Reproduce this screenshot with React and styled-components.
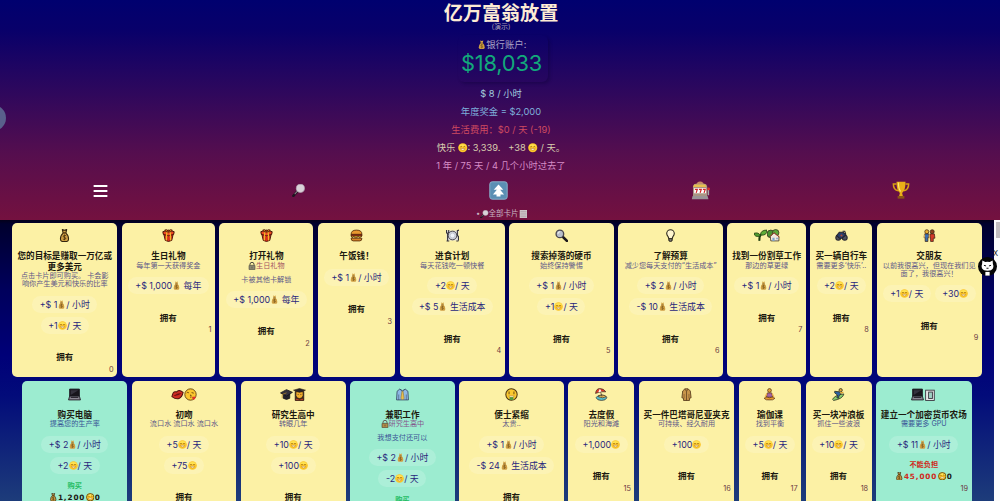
import React from "react";
import styled, { createGlobalStyle } from "styled-components";

const Global = createGlobalStyle`
  * { box-sizing: border-box; }
  html, body { margin: 0; height: 100%; overflow: hidden; }
  body { font-family: Inter, "Noto Sans CJK SC", sans-serif; background: #000070; }
`;

const face = (
  <g>
    <circle cx="12" cy="12" r="11.500" fill="#fcc62a" />
    <path d="M2 8.500a10.500 8 0 0 1 20 0z" fill="#ffe251" />
    <path d="M6 10q2-3 4 0M14 10q2-3 4 0" stroke="#7a4a0c" strokeWidth="1.800" fill="none" />
    <path d="M6.500 14h11q-1 4.500-5.500 4.500T6.500 14z" fill="#fff6dc" stroke="#b27a22" strokeWidth="1.300" />
  </g>
);
const bag = (ink) => (
  <g stroke={ink || "none"} strokeWidth={ink ? 2 : 0} strokeLinejoin="round">
    <path d="M8 1l4 1.500L16 1l-1.500 6.500h-5z" fill="#d3a648" />
    <path d="M9.500 7.500h5q5 4 5 11 0 4-3 4.500h-9q-3-.5-3-4.500 0-7 5-11z" fill="#cf9f43" />
    <path d="M8.500 7.500h7" stroke="#805a1c" strokeWidth="1.800" />
    <path d="M15 12.500q-3-2-5 0t2 3 2 3-5 0M12 10.500v10" fill="none" stroke={ink ? "#46300c" : "#71501a"} strokeWidth="1.400" />
  </g>
);
const laptop = (
  <g stroke="#1b1620" strokeWidth="1.600">
    <path d="M3 2h18v13H3z" fill="#17151c" />
    <path d="M5 4h14L5 13z" fill="#34323e" stroke="none" />
    <path d="M3 15h18l2 7H1z" fill="#8b8894" />
    <path d="M5 17.500h14" />
  </g>
);

const art = {
  face,
  faceInk: (
    <g>
      {face}
      <circle cx="12" cy="12" r="10.500" fill="none" stroke="#3a2a10" strokeWidth="2" />
    </g>
  ),
  bag: bag(null),
  bagInk: bag("#33250f"),
  gift: (
    <g stroke="#4a1509" strokeWidth="1.800" strokeLinejoin="round">
      <path d="M3 8l3 13 6 2 6-2 3-13z" fill="#d8311c" />
      <path d="M1.500 5l10.500-3 10.500 3-1 5-9.500 2.500L2.500 10z" fill="#ec4a22" />
      <path d="M9 3l-1 18M15 3l1 18" stroke="#f4b52a" strokeWidth="2.400" />
      <path d="M5 2q4-2 7 2 3-4 7-2-2 4-7 3.500Q7 6 5 2z" fill="#f6a623" />
    </g>
  ),
  burger: (
    <g stroke="#4d2608" strokeWidth="1.500">
      <path d="M2 10q0-8 10-8t10 8z" fill="#e9972f" />
      <path d="M2 10h20v3H2z" fill="#d9362a" />
      <path d="M2 13h20l-4 3-3-2-4 3-4-3-3 2z" fill="#f7d23b" />
      <path d="M2 17h20q0 5-4 5H6q-4 0-4-5z" fill="#d98428" />
    </g>
  ),
  plate: (
    <g stroke="#35323a" strokeWidth="1.600">
      <rect x="1" y="3" width="22" height="18" fill="#e0dfe2" stroke="none" />
      <circle cx="12" cy="12" r="8" fill="#cfd3dc" />
      <circle cx="12" cy="12" r="4.500" fill="#eef1f8" stroke="#c0c4d0" />
      <path d="M1 2v5l2 2v12M5 2v4L3 8M23 21v-7l-2-2V3l3-1M1 22h5M19 22h4" fill="none" strokeWidth="2" />
    </g>
  ),
  lens: (
    <g>
      <path d="M14 14l8 8" stroke="#1d1a1d" strokeWidth="5" strokeLinecap="round" />
      <circle cx="9" cy="9" r="7" fill="#b9bfca" stroke="#4a474e" strokeWidth="2.500" />
      <path d="M5.500 9a4 4 0 0 1 4-4" stroke="#fff" strokeWidth="1.500" fill="none" />
    </g>
  ),
  lensLeft: (
    <g>
      <path d="M10.500 13l-8 9" stroke="#1e1420" strokeWidth="4.500" strokeLinecap="round" />
      <path d="M10 13l-5 5.500" stroke="#8d7d88" strokeWidth="2" />
      <circle cx="15.500" cy="8" r="7.500" fill="#d9d2d8" stroke="#b5abb6" strokeWidth="1.300" />
    </g>
  ),
  bulb: (
    <g stroke="#2a261b" strokeWidth="2">
      <path d="M12 1.500a7 7 0 0 1 7 7q0 3-2.500 5.500L15 18H9l-1.500-4Q5 11.500 5 8.500a7 7 0 0 1 7-7z" fill="#fff6cf" />
      <path d="M9 18h6v3l-1.500 1.500h-3L9 21z" fill="#8d8a86" />
    </g>
  ),
  sprout: (
    <g stroke="#1e3d10" strokeWidth="1.500">
      <path d="M10 22q-1-8 3-12" fill="none" strokeWidth="3.500" />
      <path d="M12 13Q1 16 0 8q9-3 12 5z" fill="#4f9b2e" />
      <path d="M12 11Q12 2 24 2q0 11-12 9z" fill="#5fae36" />
    </g>
  ),
  house: (
    <g stroke="#36301f" strokeWidth="1.400">
      <circle cx="7" cy="9" r="7" fill="#4a9330" />
      <circle cx="16" cy="7" r="6" fill="#5ca83a" />
      <path d="M6 14l7-7 9 7v8H7z" fill="#f1e6da" />
      <path d="M5 14l8-7 10 8" stroke="#a9392b" strokeWidth="1.600" fill="none" />
      <path d="M10 16h4v6h-4zM17 16h3v3h-3z" fill="#7fa5c8" stroke="none" />
    </g>
  ),
  bike: (
    <g stroke="#26242d" strokeWidth="2">
      <circle cx="6" cy="16" r="4.500" fill="#4d5260" />
      <circle cx="18" cy="16" r="4.500" fill="#4d5260" />
      <path d="M3 12l5-6h7l5 5-7 6H8z" fill="#293e6c" />
      <path d="M14 4h4l2 6" fill="none" />
      <circle cx="12" cy="12" r="2" fill="#b04c38" stroke="none" />
    </g>
  ),
  couple: (
    <g stroke="#382013" strokeWidth="1.300">
      <circle cx="7" cy="5" r="3.700" fill="#eab033" />
      <circle cx="17" cy="5" r="3.700" fill="#8a421d" />
      <path d="M3 9h8v7H9v7H4v-7H2z" fill="#3b6fb0" />
      <path d="M13 9h8l1 8h-3v6h-5v-6h-1z" fill="#d23a28" />
      <path d="M11.500 10v7M2.500 10v6" stroke="#edb65c" strokeWidth="1.800" />
    </g>
  ),
  laptop,
  tower: (
    <g stroke="#37333d" strokeWidth="1.600">
      <rect x="3" y="4" width="16" height="19" fill="#e4e4e6" />
      <rect x="8.500" y="7.500" width="7" height="12" fill="#9fd0c2" />
    </g>
  ),
  lips: (
    <g transform="rotate(-20 12 12)">
      <path d="M1 12q5-8 9-6l2 1 2-1q5-1 9 6-5 8-11 8T1 12z" fill="#cf2c22" stroke="#4d1111" strokeWidth="1.800" />
      <path d="M4 12q8-3 16 0-8 4-16 0z" fill="#6d1215" />
    </g>
  ),
  kiss: (
    <g>
      <circle cx="12" cy="12" r="10.500" fill="#fbc62e" stroke="#5b3b0d" strokeWidth="1.600" />
      <path d="M5 9q2-2 4 0M14 8.500l4 1M11 13q4 0 1 2 3 1 0 3" stroke="#5b3208" strokeWidth="1.500" fill="none" />
      <path d="M18 22q-5-4-2-6 2-1 2 1 1-2 3-1 2 2-3 6z" fill="#e0312b" />
    </g>
  ),
  cap: (
    <g stroke="#15141a" strokeWidth="1.500">
      <path d="M6 11v8q6 4 12 0v-8z" fill="#24232b" />
      <path d="M1 9l11-6 11 5-11 7z" fill="#34323c" />
      <path d="M12 9l-8 3v7" stroke="#b98a28" fill="none" strokeWidth="1.300" />
    </g>
  ),
  student: (
    <g stroke="#2c1c12" strokeWidth="1.100">
      <path d="M4 6h16v17H4z" fill="#3a2a20" />
      <path d="M5.500 7h13v7q-1.500 5.500-6.500 5.500T5.500 14z" fill="#f2ae2e" />
      <path d="M1 4l11-3 11 3-11 4z" fill="#24222b" />
      <path d="M5 18.500l7 2.500 7-2.500V23H5z" fill="#c4482d" />
      <path d="M9.500 11v2M14.500 11v2" />
    </g>
  ),
  shirt: (
    <g stroke="#32455f" strokeWidth="1.500" strokeLinejoin="round">
      <path d="M7 2L2 6 1 22h22L22 6l-5-4-5 3z" fill="#8fb9e6" />
      <path d="M7 2l5 5 5-5M5 12v10M19 12v10" fill="none" strokeWidth="1" />
      <path d="M11 6h2l2 13-3 3-3-3z" fill="#e8bf4e" stroke="#8e702c" strokeWidth="1" />
    </g>
  ),
  rich: (
    <g>
      <circle cx="12" cy="12" r="10.500" fill="#fbc92f" stroke="#4c3410" strokeWidth="1.900" />
      <path d="M7.500 6.500v5M16.500 6.500v5" stroke="#785612" strokeWidth="2" />
      <path d="M7 14.500h10l-2 3H9z" fill="#fff2c4" stroke="#a8761f" strokeWidth="1" />
      <path d="M8.500 17h7v5h-7z" fill="#4d9b42" />
    </g>
  ),
  beach: (
    <g stroke="#403226" strokeWidth="1.300">
      <path d="M2 18q2-5 10-5t10 5q-2 5-10 5T2 18z" fill="#55bcc9" />
      <path d="M6 16q2-3 7-3t8 3q-7 4-15 0z" fill="#f0c258" />
      <path d="M9 3l4 13" fill="none" />
      <path d="M1 10Q2 1 9 1t11 6L10 7z" fill="#dd3b29" />
      <path d="M9 1.500l-3 6.500 6-1.500z" fill="#fff" stroke="none" />
    </g>
  ),
  jacket: (
    <g stroke="#4d3217" strokeWidth="1.500">
      <path d="M9 1.500h6l4 4 1.500 12.500-3 1v4h-11v-4l-3-1L5 5.500z" fill="#c9964b" />
      <path d="M12 6v17M9 2l3 4 3-4" fill="none" strokeWidth="1.200" />
      <path d="M7.500 11v8M16.500 11v8" strokeWidth="0.800" />
    </g>
  ),
  yoga: (
    <g stroke="#533015" strokeWidth="1.300">
      <circle cx="12" cy="4.500" r="3.500" fill="#e6a337" />
      <path d="M8 9h8l2 8H6z" fill="#a263a6" />
      <path d="M2 19q5-4 10-1 5-3 10 1-3 4-10 3-7 1-10-3z" fill="#e79a32" />
      <path d="M7 10l-3 7M17 10l3 7" stroke="#edae49" strokeWidth="2.200" />
    </g>
  ),
  surf: (
    <g stroke="#2f3322" strokeWidth="1.500">
      <path d="M1 21Q6 12 22 11q-2 9-19 12z" fill="#88cf6c" />
      <circle cx="16" cy="4" r="3" fill="#e4a436" />
      <path d="M5 6l8 1 4 4-4 3-1 5-3-1 1-5-5-4z" fill="#2b63a4" />
      <path d="M15 9l6-1" stroke="#e4a436" strokeWidth="2.500" />
    </g>
  ),
  lock: (
    <g stroke="#443a30" strokeWidth="1.800">
      <path d="M6 11V7a6 6 0 0 1 12 0v4" fill="none" stroke="#66625f" strokeWidth="3" />
      <rect x="3" y="10" width="18" height="13" rx="1" fill="#b08c4b" />
      <path d="M12 14v5" />
    </g>
  ),
  lockGray: (
    <g stroke="#4d4b40" strokeWidth="1.800">
      <path d="M6 11V7a6 6 0 0 1 12 0v4" fill="none" strokeWidth="3" />
      <rect x="3" y="10" width="18" height="13" rx="1" fill="#8b8870" />
      <path d="M12 14v5" />
    </g>
  ),
  menu: <path d="M1 3h22v3.200H1zM1 11h22v3.200H1zM1 19h22v3.200H1z" fill="#fff" />,
  up: (
    <g>
      <rect x="1" y="1" width="22" height="22" rx="3" fill="#5b8fb4" stroke="#8cb2cc" strokeWidth="1.200" />
      <path d="M12 4.500l6 6.500H6z" fill="#fff" />
      <path d="M12 8.500l7 8.500h-4.500v2.500h-5V17H5z" fill="#fff" />
    </g>
  ),
  slot: (
    <g>
      <path d="M7 4q0-3 4.500-3.500Q16 1 16 4z" fill="#c98a63" />
      <path d="M2.500 8q0-4 4-4.500h10q4 .5 4 4.500v11h-18z" fill="#a99683" />
      <path d="M4 4.500h14l1.500 3h-17z" fill="#e8bf4e" />
      <rect x="4" y="9" width="15" height="6.500" fill="#fff" />
      <path d="M5 10.500h3L6.500 15M10 10.500h3L11.500 15M15 10.500h3L16.500 15" stroke="#d22525" strokeWidth="1.500" fill="none" />
      <path d="M2 19h19l1 4H1z" fill="#9a9597" />
      <path d="M22 18v-7" stroke="#aaa" strokeWidth="1.800" />
      <circle cx="22.200" cy="10" r="1.800" fill="#d53030" />
    </g>
  ),
  trophy: (
    <g>
      <path d="M6 4H1.800q0 8 6.700 9M18 4h4.200q0 8-6.700 9" fill="none" stroke="#d99f12" strokeWidth="2" />
      <path d="M6 1h12q0 12-4.500 15l1 4h-5l1-4Q6 13 6 1z" fill="#e9ae18" />
      <path d="M8.500 2q0 8 3 12" stroke="#ffe678" strokeWidth="1.500" fill="none" />
      <path d="M7.500 20h9v3.500h-9z" fill="#8b5415" />
    </g>
  ),
  list: (
    <g>
      <path d="M2 0h21v24H2z" fill="#d0c8cb" />
      <path d="M4 4h17M4 9h17M4 14h17M4 19h17" stroke="#9d8b95" strokeWidth="1.500" />
    </g>
  ),
  cat: (
    <g>
      <circle cx="12" cy="12" r="12" fill="#050505" />
      <path d="M5.500 4.500l3.700 1.700q2.800-.7 5.600 0l3.700-1.700.3 4.400q1.400 2.600.2 5.400-1.800 3.200-7 3.200t-7-3.200q-1.200-2.800.2-5.400z" fill="#fff" />
      <path d="M7.500 10.500l2.700.8M16.500 10.500l-2.700.8M10.700 14.200h2.600" stroke="#050505" strokeWidth="1.200" />
      <path d="M9.300 18.800h5.400V23.500H9.300z" fill="#fff" />
    </g>
  ),
};

const Glyph = styled.svg`
  width: ${(p) => p.$size}px;
  height: ${(p) => p.$size}px;
  flex: none;
  display: block;
`;
const Icon = ({ name, size }) => (
  <Glyph viewBox="0 0 24 24" $size={size}>{art[name]}</Glyph>
);

const RichLine = styled.span`
  display: inline-flex;
  align-items: center;
  white-space: pre;
`;
const Rich = ({ text, size }) => (
  <RichLine>
    {text.split(/[{}]/).map((part, i) =>
      i % 2 ? <Icon key={i} name={part} size={size} /> : <span key={i}>{part}</span>
    )}
  </RichLine>
);

const Page = styled.main`
  position: relative;
  width: 1000px;
  height: 501px;
  overflow: hidden;
  display: flex;
  flex-direction: column;
`;
const Header = styled.header`
  height: 220px;
  flex: none;
  display: flex;
  flex-direction: column;
  align-items: center;
  background: linear-gradient(#00006f 0, #08006a 30px, #30085c 95px, #560e4e 155px, #74113f 220px);
`;
const Title = styled.h1`
  margin: 0;
  padding: 1px 0 0 2px;
  height: 24px;
  font-size: 19.1px;
  line-height: 24px;
  font-weight: 700;
  color: #fdebd4;
`;
const Subtitle = styled.div`
  font-size: 7px;
  line-height: 6px;
  padding-left: 2px;
  color: #a79db4;
`;
const Bank = styled.section`
  width: 90px;
  height: 47px;
  margin-top: 5px;
  margin-left: 6px;
  padding-top: 4px;
  display: flex;
  flex-direction: column;
  align-items: center;
  border-radius: 6px;
  box-shadow: 2px 2px 3px rgba(10, 0, 50, 0.3);
`;
const BankLabel = styled.div`
  display: flex;
  height: 12px;
  line-height: 12px;
  font-size: 9.4px;
  color: #aaa2c6;
  padding-right: 3px;
`;
const Balance = styled.div`
  font-size: 21.800px;
  line-height: 25px;
  letter-spacing: -0.150px;
  color: #12a97b;
  padding-right: 3px;
`;
const Stats = styled.div`
  display: flex;
  flex-direction: column;
  align-items: center;
  padding: 2.800px 0 0 2px;
`;
const Stat = styled.div`
  height: 18.1px;
  line-height: 18px;
  font-size: 9.300px;
  display: flex;
  align-items: center;
  color: ${(p) => p.$color};
`;
const Nav = styled.nav`
  width: 1000px;
  height: 33px;
  padding: 0 0 3px 1px;
  display: grid;
  grid-template-columns: 199px 197px 202px 202px 199px;
  place-items: center;
`;
const Filter = styled.div`
  display: flex;
  font-size: 7.500px;
  line-height: 12px;
  height: 12px;
  color: #c8b5c2;
  padding-left: 3px;
`;

const Body = styled.div`
  flex: 1;
  display: flex;
  min-height: 0;
`;
const Deck = styled.section`
  width: 994px;
  flex: none;
  display: flex;
  flex-direction: column;
  gap: 4.4px;
  padding-top: 2.8px;
  background: linear-gradient(#03001a 0, #00002e 4px, #00005c 70px, #000078 135px, #020b7a 175px, #1d3c7a 281px);
`;
const Row = styled.div`
  display: flex;
  flex: none;
  height: 154px;
  justify-content: center;
  gap: 4.4px;
`;
const Scroll = styled.aside`
  flex: 1;
  background: #fbfbfb;
  padding: 2px 0 0 2px;
`;
const Thumb = styled.div`
  height: 16px;
  background: #c3bfc0;
`;
const CardBox = styled.article`
  width: ${(p) => p.$width}px;
  flex: none;
  display: flex;
  flex-direction: column;
  align-items: center;
  text-align: center;
  padding-top: 5.500px;
  border-radius: 5px;
  background: ${(p) => (p.$open ? "#9cecd0" : "#fcf1a5")};
`;
const Art = styled.div`
  display: flex;
  height: 15px;
  align-items: center;
`;
const Name = styled.h2`
  margin: 8px 0 0.400px;
  font-size: 8.600px;
  line-height: 10.200px;
  font-weight: 700;
  color: #1d1a10;
  white-space: pre;
`;
const Note = styled.div`
  font-size: 7.150px;
  line-height: 8.200px;
  color: ${(p) => (p.$open ? "#3a5696" : "#5e5888")};
  white-space: pre;
`;
const Need = styled.div`
  display: flex;
  height: 8.200px;
  margin-bottom: 5.600px;
  font-size: 7.150px;
  line-height: 8.200px;
  color: ${(p) => (p.$open ? "#85578c" : "#a45462")};
`;
const Chips = styled.div`
  display: flex;
  flex-direction: ${(p) => (p.$inline ? "row" : "column")};
  align-items: center;
  gap: 4px;
  margin-top: 7.200px;
`;
const Chip = styled.div`
  height: 17px;
  display: flex;
  align-items: center;
  padding: 0 7.500px;
  border-radius: 9px;
  font-size: 8.900px;
  color: #29277c;
  background: rgba(255, 255, 255, 0.17);
`;
const Owned = styled.div`
  margin-top: 17.300px;
  font-size: 8.500px;
  line-height: 12px;
  font-weight: 700;
  color: #1d1a10;
`;
const Offer = styled.div`
  margin-top: 6.500px;
  font-size: 7.200px;
  line-height: 11px;
  font-weight: 700;
  color: ${(p) => (p.$poor ? "#d02a20" : "#1fbc62")};
`;
const Price = styled.div`
  display: flex;
  align-items: center;
  gap: 0.500px;
  height: 12px;
  font-family: "DejaVu Sans", sans-serif;
  font-weight: 700;
  font-size: 7.300px;
  letter-spacing: 0.850px;
  color: #1c1a14;
`;
const Cost = styled.span`
  color: ${(p) => (p.$poor ? "#d02a20" : "#1c1a14")};
`;
const Index = styled.div`
  align-self: flex-end;
  padding-right: 3.500px;
  margin-top: 0.600px;
  font-size: 7.300px;
  line-height: 12px;
  color: #6b3a42;
`;
const SideTab = styled.div`
  position: absolute;
  left: -20px;
  top: 105px;
  width: 26px;
  height: 26px;
  border-radius: 50%;
  background: #59608c;
`;
const CatBadge = styled.div`
  position: absolute;
  left: 978px;
  top: 256.500px;
`;
const CloseMark = styled.div`
  position: absolute;
  left: 993px;
  top: 247.500px;
  font-size: 7.500px;
  line-height: 12px;
  color: #222;
`;

const rows = [
  [
    { w: 104.9, art: ["bagInk"], name: "您的目标是赚取一万亿或\n更多美元", note: "点击卡片即可购买。 卡会影\n响你产生美元和快乐的比率", chips: ["+$ 1{bag}/ 小时", "+1{face}/ 天"] },
    { w: 93.5, art: ["gift"], name: "生日礼物", note: "每年第一天获得奖金", chips: ["+$ 1,000{bag} 每年"] },
    { w: 93.8, art: ["gift"], name: "打开礼物", lock: "lockGray", need: "生日礼物", note: "卡被其他卡解锁", chips: ["+$ 1,000{bag} 每年"] },
    { w: 77.8, art: ["burger"], name: "午饭钱！", chips: ["+$ 1{bag}/ 小时"] },
    { w: 104.8, art: ["plate"], name: "进食计划", note: "每天花钱吃一顿快餐", chips: ["+2{face}/ 天", "+$ 5{bag} 生活成本"] },
    { w: 104.8, art: ["lens"], name: "搜索掉落的硬币", note: "始终保持警惕", chips: ["+$ 1{bag}/ 小时", "+1{face}/ 天"] },
    { w: 104.8, art: ["bulb"], name: "了解预算", note: "减少您每天支付的“生活成本”", chips: ["+$ 2{bag}/ 小时", "-$ 10{bag} 生活成本"] },
    { w: 78.5, art: ["sprout", "house"], name: "找到一份割草工作", note: "那边的草更绿", chips: ["+$ 1{bag}/ 小时"] },
    { w: 62, art: ["bike"], name: "买一辆自行车", note: "需要更多‘快乐’..", chips: ["+2{face}/ 天"] },
    { w: 105, art: ["couple"], name: "交朋友", note: "以前我很高兴，但现在我们见\n面了，我很高兴！", inline: true, chips: ["+1{face}/ 天", "+30{face}"] },
  ],
  [
    { w: 104.8, open: true, art: ["laptop"], name: "购买电脑", note: "提高您的生产率", chips: ["+$ 2{bag}/ 小时", "+2{face}/ 天"], cost: "1,200" },
    { w: 104.8, art: ["lips", "kiss"], name: "初吻", note: "流口水 流口水 流口水", chips: ["+5{face}/ 天", "+75{face}"] },
    { w: 104.8, art: ["cap", "student"], name: "研究生高中", note: "转眼几年", chips: ["+10{face}/ 天", "+100{face}"] },
    { w: 104.8, open: true, art: ["shirt"], name: "兼职工作", lock: "lock", need: "研究生高中", note: "我想支付还可以", chips: ["+$ 2{bag}/ 小时", "-2{face}/ 天"], cost: "0" },
    { w: 104.8, art: ["rich"], name: "便士紧缩", note: "太贵..", chips: ["+$ 1{bag}/ 小时", "-$ 24{bag} 生活成本"] },
    { w: 66, art: ["beach"], name: "去度假", note: "阳光和海滩", chips: ["+1,000{face}"] },
    { w: 95.6, art: ["jacket"], name: "买一件巴塔哥尼亚夹克", note: "可持续、经久耐用", chips: ["+100{face}"] },
    { w: 62.5, art: ["yoga"], name: "瑜伽课", note: "找到平衡", chips: ["+5{face}/ 天"] },
    { w: 66, art: ["surf"], name: "买一块冲浪板", note: "抓住一些波浪", chips: ["+10{face}/ 天"] },
    { w: 95.6, open: true, art: ["laptop", "tower"], name: "建立一个加密货币农场", note: "需要更多 GPU", chips: ["+$ 11{bag}/ 小时"], cost: "45,000", poor: true },
  ],
];

function Card({ card, index }) {
  const { w, open, name, note, need, lock, chips, cost, poor, inline } = card;
  return (
    <CardBox $width={w} $open={open}>
      <Art>{card.art.map((a) => <Icon key={a} name={a} size={13} />)}</Art>
      <Name>{name}</Name>
      {need && <Need $open={open}><Icon name={lock} size={8} />{need}</Need>}
      {note && <Note $open={open}>{note}</Note>}
      <Chips $inline={inline}>{chips.map((c) => <Chip key={c}><Rich text={c} size={9} /></Chip>)}</Chips>
      {cost ? (
        <>
          <Offer $poor={poor}>{poor ? "不能负担" : "购买"}</Offer>
          <Price>
            <Icon name="bagInk" size={8.5} />
            <Cost $poor={poor}>{cost}</Cost>
            <Icon name="faceInk" size={8.5} />0
          </Price>
        </>
      ) : (
        <Owned>拥有</Owned>
      )}
      <Index>{index}</Index>
    </CardBox>
  );
}

export default function App() {
  return (
    <Page>
      <Global />
      <Header>
        <Title>亿万富翁放置</Title>
        <Subtitle>(演示)</Subtitle>
        <Bank>
          <BankLabel><Rich text="{bag}银行账户:" size={9.5} /></BankLabel>
          <Balance>$18,033</Balance>
        </Bank>
        <Stats>
          <Stat $color="#a3cfdf">$ 8 / 小时</Stat>
          <Stat $color="#7daedb">年度奖金 = $2,000</Stat>
          <Stat $color="#cf4a60">生活费用：$0 / 天 (-19)</Stat>
          <Stat $color="#d8cdae"><Rich text="快乐 {face}: 3,339.   +38 {face} / 天。" size={9.5} /></Stat>
          <Stat $color="#d68cc6">1 年 / 75 天 / 4 几个小时过去了</Stat>
        </Stats>
        <Nav>
          <Icon name="menu" size={15} />
          <Icon name="lensLeft" size={13} />
          <Icon name="up" size={19} />
          <Icon name="slot" size={19} />
          <Icon name="trophy" size={18} />
        </Nav>
        <Filter><Rich text="•{lensLeft}全部卡片{list}" size={8.5} /></Filter>
      </Header>
      <Body>
        <Deck>
          {rows.map((cards, r) => (
            <Row key={r}>
              {cards.map((card, i) => <Card key={card.name} card={card} index={r * 10 + i} />)}
            </Row>
          ))}
        </Deck>
        <Scroll><Thumb /></Scroll>
      </Body>
      <SideTab />
      <CloseMark>X</CloseMark>
      <CatBadge><Icon name="cat" size={19} /></CatBadge>
    </Page>
  );
}
